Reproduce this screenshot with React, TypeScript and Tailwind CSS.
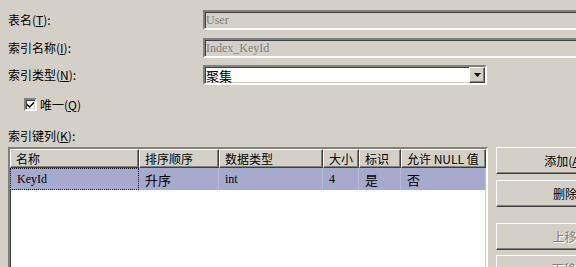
import React from 'react'

const sunken =
  'border-2 border-t-[#808080] border-l-[#808080] border-b-white border-r-white shadow-[inset_1px_1px_#404040,inset_-1px_-1px_#d4d0c8]'
const raised =
  'border border-t-white border-l-white border-b-[#404040] border-r-[#404040] shadow-[inset_-1px_-1px_#808080]'
const latin = "font-['Liberation_Serif','Noto_Sans_CJK_SC',serif] text-[12px]"

function Label({ text, hot }: { text: string; hot: string }) {
  return (
    <span>
      {text}(<u>{hot}</u>):
    </span>
  )
}

const columns = [
  { title: '名称', w: 'w-[129px]' },
  { title: '排序顺序', w: 'w-[80px]' },
  { title: '数据类型', w: 'w-[104px]' },
  { title: '大小', w: 'w-[36px]' },
  { title: '标识', w: 'w-[42px]' },
  { title: '允许 NULL 值', w: 'w-[85px]' },
]

const row = ['KeyId', '升序', 'int', '4', '是', '否']

function Btn({ label, hot, tail = '', disabled = false, className = '' }: { label: string; hot: string; tail?: string; disabled?: boolean; className?: string }) {
  return (
    <div
      className={`${raised} flex h-[27px] w-[154px] shrink-0 items-center justify-center bg-[#d4d0c8] ${
        disabled ? 'text-[#808080] [text-shadow:1px_1px_#ffffff]' : 'text-black'
      } ${className}`}
    >
      {label}(<u>{hot}</u>){tail}
    </div>
  )
}

export default function App() {
  return (
    <div className="relative h-[267px] w-[576px] overflow-hidden bg-[#d4d0c8] px-[8px] pt-[10px] font-['Noto_Sans_CJK_SC',sans-serif] text-[12px] leading-none text-black">
      <div className="flex h-[20px] items-center">
        <div className="w-[195px] shrink-0">
          <Label text="表名" hot="T" />
        </div>
        <div className={`${sunken} flex h-[20px] w-[400px] shrink-0 items-center bg-[#d4d0c8] pl-[1px] text-[#808080] ${latin}`}>
          User
        </div>
      </div>
      <div className="mt-[8px] flex h-[20px] items-center">
        <div className="w-[195px] shrink-0">
          <Label text="索引名称" hot="I" />
        </div>
        <div className={`${sunken} flex h-[20px] w-[400px] shrink-0 items-center bg-[#d4d0c8] pl-[1px] text-[#808080] ${latin}`}>
          Index_KeyId
        </div>
      </div>
      <div className="mt-[7px] flex h-[20px] items-center">
        <div className="w-[195px] shrink-0">
          <Label text="索引类型" hot="N" />
        </div>
        <div className={`${sunken} flex h-[20px] w-[284px] shrink-0 items-center justify-between bg-white pl-[1px]`}>
          <span className="text-[13px]">聚集</span>
          <div className={`${raised} flex h-[16px] w-[16px] items-center justify-center bg-[#d4d0c8]`}>
            <svg width="7" height="4" viewBox="0 0 7 4">
              <path d="M0 0h7L3.5 4z" fill="#000" />
            </svg>
          </div>
        </div>
      </div>
      <div className="mt-[13px] flex h-[13px] items-center pl-[16px]">
        <div className={`${sunken} flex h-[13px] w-[13px] items-center justify-center bg-white`}>
          <svg width="7" height="7" viewBox="0 0 7 7">
            <path d="M0 2.5l2.5 2.5L7 0.5v2L2.5 7 0 4.5z" fill="#000" />
          </svg>
        </div>
        <span className="ml-[3px]">
          唯一(<u>Q</u>)
        </span>
      </div>
      <div className="mt-[19px] flex h-[12px] items-center">
        <Label text="索引键列" hot="K" />
      </div>
      <div className="mt-[5px] flex gap-[8px]">
        <div className={`${sunken} h-[140px] w-[480px] shrink-0 bg-white`}>
          <div className="flex h-[19px]">
            {columns.map((c) => (
              <div key={c.title} className={`${raised} ${c.w} flex shrink-0 items-center bg-[#d4d0c8] pl-[5px]`}>
                {c.title}
              </div>
            ))}
          </div>
          <div className="flex h-[22px] bg-[#a6aacd]">
            {row.map((v, i) => (
              <div
                key={i}
                className={`${columns[i].w} flex shrink-0 items-center pl-[6px] ${
                  i === 0 ? 'border border-dotted border-black pl-[5px]' : 'border-r border-r-[#b8bcd8]'
                } ${/[A-Za-z0-9]/.test(v) ? latin : 'text-[13px]'}`}
              >
                {v}
              </div>
            ))}
          </div>
        </div>
        <div className="flex flex-col">
          <Btn label="添加" hot="A" tail="..." className="pr-[8px]" />
          <Btn label="删除" hot="R" className="mt-[6px]" />
          <Btn label="上移" hot="U" disabled className="mt-[16px]" />
          <Btn label="下移" hot="W" disabled className="mt-[5px]" />
        </div>
      </div>
    </div>
  )
}
